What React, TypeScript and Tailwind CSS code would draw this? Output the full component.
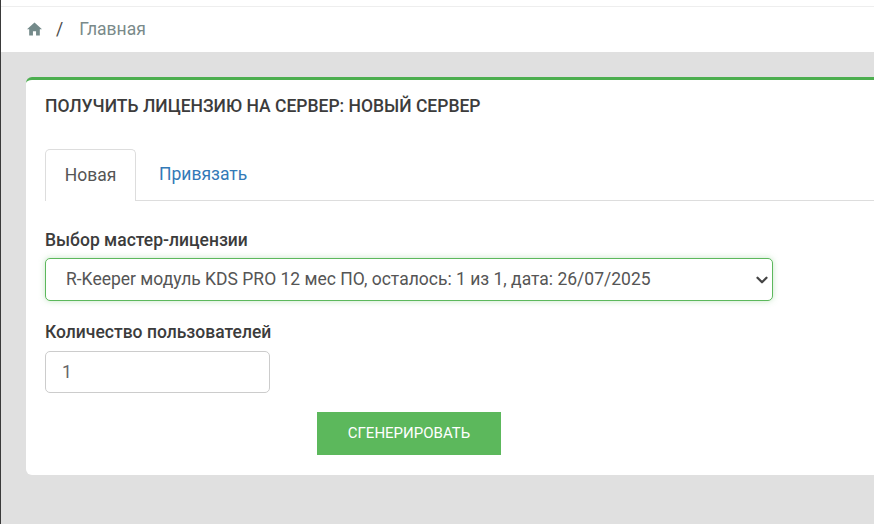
import React from 'react';
import { ChevronDown } from 'lucide-react';

const App = () => {
  return (
    <div className="h-[524px] w-[874px] overflow-hidden bg-[#e0e0e0] border-l border-[#3a3a3a] font-['Roboto',sans-serif]">
      {/* Breadcrumb */}
      <div className="h-[52px] bg-white pt-[6px]">
        <div className="h-px bg-[#eeeeee]" />
        <div className="flex h-[45px] items-center pl-[26px] text-[17.5px] text-[#7a8a8a]">
          <svg className="-mt-[2px]" width="15" height="14" viewBox="0 0 24 22" fill="#748a8a">
            <path d="M12 0.5 0 11.5H3.5V21.5h6v-7h5v7h6V11.5H24z" />
          </svg>
          <span className="ml-[14px] text-[#4a4a4a]">/</span>
          <span className="ml-[16px]">Главная</span>
        </div>
      </div>

      {/* Card */}
      <div className="ml-[25px] mt-[25px] h-[398px] rounded-l-[6px] border-t-[3px] border-[#4cae4f] bg-white pl-[19px]">
        <h2 className="pt-[16px] text-[17.5px] font-medium leading-[20px] text-[#3c3c3c]">
          ПОЛУЧИТЬ ЛИЦЕНЗИЮ НА СЕРВЕР: НОВЫЙ СЕРВЕР
        </h2>

        {/* Tabs */}
        <div className="mt-[33px] flex h-[52px] border-b border-[#dddddd] text-[17.5px]">
          <div className="flex h-[52px] w-[91px] items-center justify-center rounded-t-[5px] border border-b-0 border-[#dddddd] bg-white text-[#555555]">
            Новая
          </div>
          <div className="ml-[23px] flex h-[51px] items-center text-[#337ab7]">Привязать</div>
        </div>

        {/* Form */}
        <label className="mt-[29px] block text-[17.5px] font-medium leading-[20px] text-[#3c3c3c]">
          Выбор мастер-лицензии
        </label>
        <div className="relative mt-[8px] w-[728px]">
          <select
            defaultValue="kds"
            className="block h-[43px] w-full appearance-none rounded-[5px] border border-[#5cb85c] bg-white pl-[20px] pr-[12px] text-[17.5px] text-[#555555] shadow-[0_0_6px_rgba(92,184,92,0.35)] outline-none"
          >
            <option value="kds">R-Keeper модуль KDS PRO 12 мес ПО, осталось: 1 из 1, дата: 26/07/2025</option>
          </select>
          <ChevronDown
            className="pointer-events-none absolute right-[2.5px] top-[13px] text-[#444444]"
            size={18}
            strokeWidth={3}
          />
        </div>

        <label className="mt-[21px] block text-[17.5px] font-medium leading-[20px] text-[#3c3c3c]">
          Количество пользователей
        </label>
        <input
          defaultValue="1"
          className="mt-[9px] block h-[42px] w-[225px] rounded-[5px] border border-[#cccccc] bg-white px-[16px] text-[17.5px] text-[#666666] outline-none"
        />

        <button className="ml-[272px] mt-[19px] block h-[43px] w-[184px] bg-[#5cb85c] text-[15px] text-white">
          СГЕНЕРИРОВАТЬ
        </button>
      </div>
    </div>
  );
};

export default App;
